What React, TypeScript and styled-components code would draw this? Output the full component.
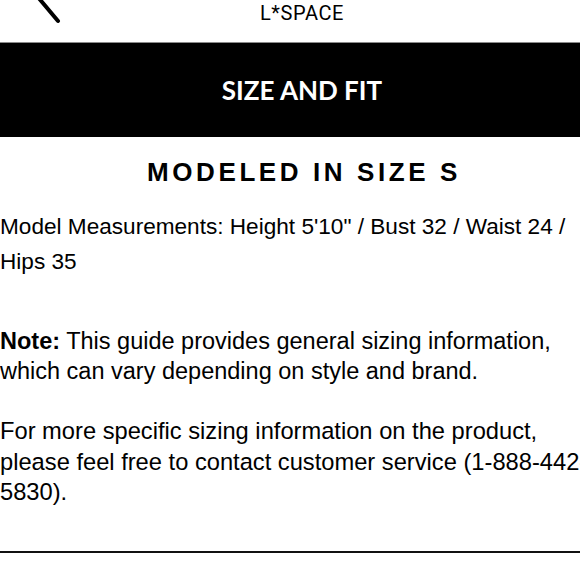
import React from "react";
import styled, { createGlobalStyle } from "styled-components";

const Global = createGlobalStyle`
  html, body { margin: 0; padding: 0; background: #fff; }
  body { width: 580px; height: 580px; overflow: hidden; }
`;

const Page = styled.div`
  width: 604px;
  font-family: "Liberation Sans", Arial, sans-serif;
  color: #000;
`;

const TopBar = styled.header`
  height: 42px;
  border-bottom: 1px solid #8a8a8a;
  display: grid;
  grid-template-columns: 1fr auto 1fr;
  align-items: start;
`;

const BackButton = styled.div`
  padding-left: 33px;
  margin-top: -2px;
  line-height: 0;
`;

const Brand = styled.div`
  font-family: Roboto, "Liberation Sans", sans-serif;
  font-size: 20px;
  letter-spacing: 0.6px;
  line-height: 24px;
  padding-top: 1px;
`;

const TitleBand = styled.div`
  height: 94px;
  background: #000;
  display: flex;
  align-items: center;
  justify-content: center;
`;

const Title = styled.h1`
  margin: 0;
  color: #fff;
  font-family: Lato, "Open Sans", sans-serif;
  font-weight: 700;
  font-size: 26px;
`;

const Subtitle = styled.h2`
  margin: 20px 0 0;
  text-align: center;
  padding-left: 4px;
  font-family: "Liberation Sans", Arial, sans-serif;
  font-weight: 700;
  font-size: 26px;
  letter-spacing: 3.6px;
  line-height: 30px;
`;

const Body = styled.div`
  width: 590px;
  font-size: 23.5px;
  margin-top: 22px;
`;

const Para = styled.p<{ $lh: number; $gap: number; $size?: number }>`
  margin: ${(p) => p.$gap}px 0 0;
  line-height: ${(p) => p.$lh}px;
  font-size: ${(p) => (p.$size ? `${p.$size}px` : "inherit")};
`;

const Divider = styled.hr`
  margin: 43px 0 0;
  border: none;
  height: 2px;
  background: #111;
  width: 604px;
`;

export default function App() {
  return (
    <Page>
      <Global />
      <TopBar>
        <BackButton>
          <svg width="30" height="28" viewBox="0 0 30 28">
            <path d="M4 -2 L25 23" stroke="#000" strokeWidth="4" strokeLinecap="round" fill="none" />
          </svg>
        </BackButton>
        <Brand>L*SPACE</Brand>
        <div />
      </TopBar>
      <TitleBand>
        <Title>SIZE AND FIT</Title>
      </TitleBand>
      <Subtitle>MODELED IN SIZE S</Subtitle>
      <Body>
        <Para $lh={35} $gap={0} $size={22.6}>
          Model Measurements: Height 5'10" / Bust 32 / Waist 24 / Hips 35
        </Para>
        <Para $lh={30} $gap={47}>
          <b>Note:</b> This guide provides general sizing information, which can vary depending on style and brand.
        </Para>
        <Para $lh={30.5} $gap={30} $size={23.7}>
          For more specific sizing information on the product, please feel free to contact customer service (1-888-442-5830).
        </Para>
      </Body>
      <Divider />
    </Page>
  );
}
